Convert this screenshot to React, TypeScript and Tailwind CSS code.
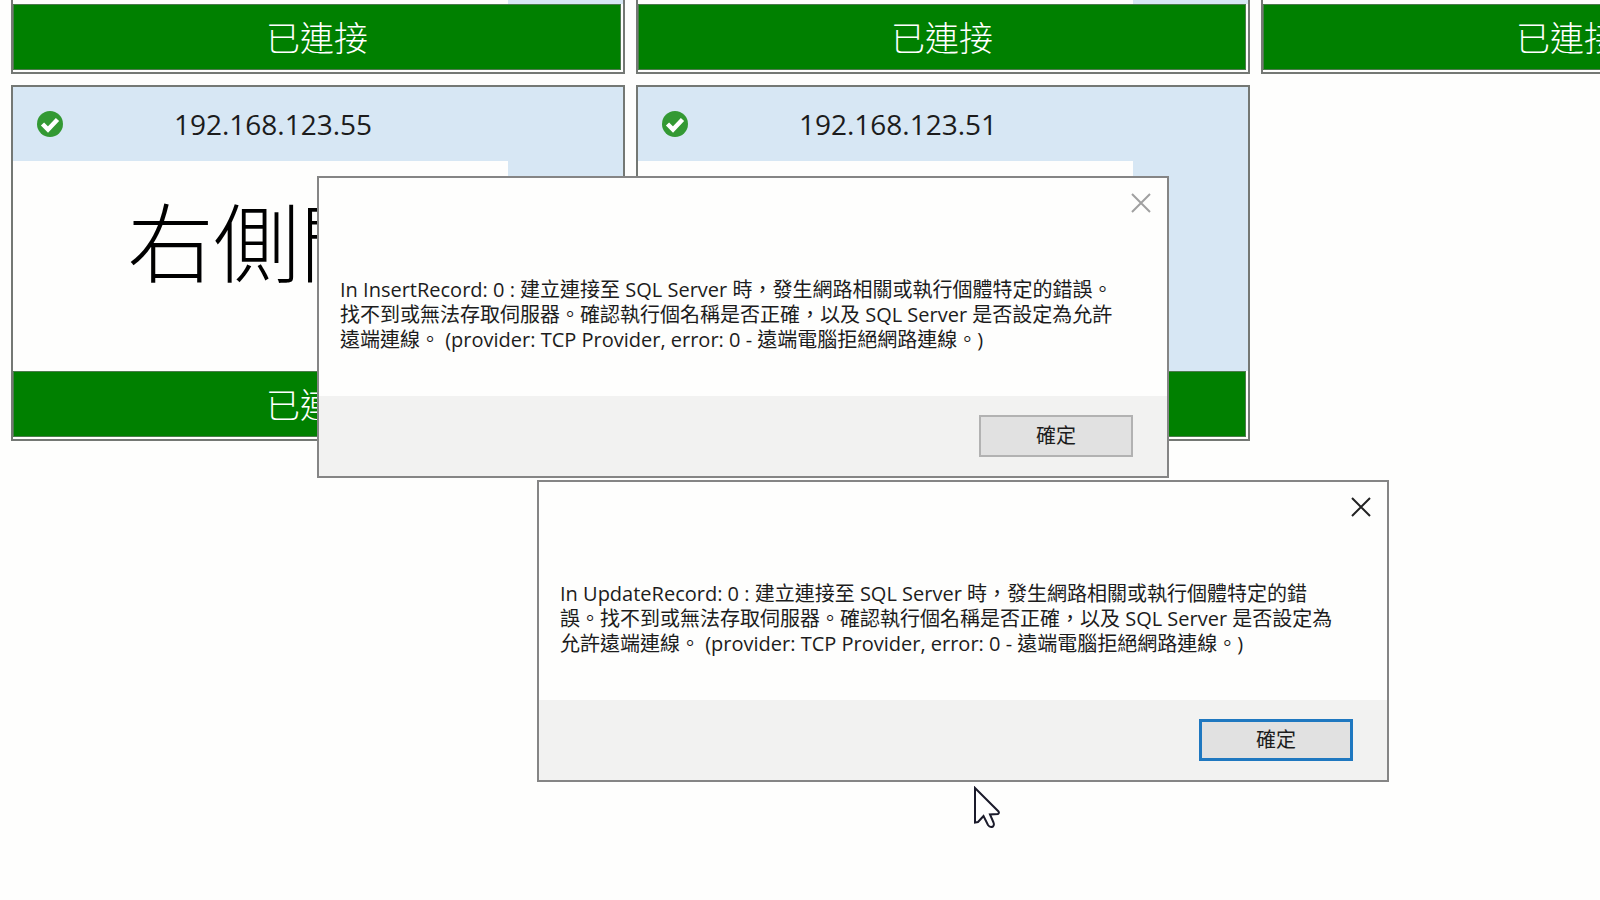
import clsx from "clsx";

const Check = () => (
  <svg viewBox="0 0 26 26" className="size-[26px]" aria-hidden="true">
    <circle cx="13" cy="13" r="13" fill="#339933" />
    <path d="M5.500 13l5.500 5.500L20.500 8.500" fill="none" stroke="#fff" strokeWidth="4.500" />
  </svg>
);

const Cross = () => (
  <svg viewBox="0 0 20 20" className="size-5" fill="none" stroke="currentColor" strokeWidth="2" aria-hidden="true">
    <path d="M1 1l18 18M19 1L1 19" />
  </svg>
);

type CardProps = { ip?: string; name?: string };

const Card = ({ ip, name }: CardProps) => (
  <section className={clsx("w-[614px] shrink-0 border-2 border-[#747874] bg-[#fefefd]", !ip && "border-t-0")}>
    {ip && (
      <header className="flex h-[74px] items-center bg-[#d7e7f4] pl-6">
        <Check />
        <h2 className="w-[420px] text-center text-[28px]">{ip}</h2>
      </header>
    )}
    <div className={clsx("flex", ip ? "h-[210px]" : "h-1")}>
      <div className="flex w-[495px] justify-center pt-5 pr-2 text-[86px] leading-[124px] font-light text-black">
        {name}
      </div>
      <div className="flex-1 bg-[#d7e7f4]" />
    </div>
    <div className="mr-0.5 mb-0.5 flex h-[66px] items-center justify-center border border-[#4d7a4d] bg-[#008000] pt-0.5 text-[34px] font-light text-white">
      已連接
    </div>
  </section>
);

type DialogProps = { lines: string[]; active?: boolean; className: string };

const Dialog = ({ lines, active, className }: DialogProps) => (
  <div
    role="dialog"
    className={clsx("absolute flex h-[302px] w-[852px] flex-col border-2 border-[#858585] bg-[#fefefd]", className)}
  >
    <div className="flex h-[87px] justify-end pt-[15px] pr-4">
      <button aria-label="關閉" className={clsx("size-5", active ? "text-[#222]" : "text-[#a0a0a0]")}>
        <Cross />
      </button>
    </div>
    <p className="flex-1 pt-3 pl-[21px] text-[20px] leading-[25px] whitespace-nowrap">
      {lines.map((line) => (
        <span key={line} className="block">{line}</span>
      ))}
    </p>
    <footer className="flex h-20 items-start justify-end bg-[#f2f2f1] pt-[19px] pr-[34px]">
      <button
        className={clsx(
          "h-[42px] w-[154px] bg-[#e1e1e1] text-[20px]",
          active ? "border-3 border-[#1f78c0]" : "border-2 border-[#b2b2b2]"
        )}
      >
        確定
      </button>
    </footer>
  </div>
);

const App = () => {
  return (
    <main className="relative flex h-screen flex-col gap-[11px] overflow-hidden bg-[#fefefd] pl-[11px] font-['Open_Sans','Noto_Sans_CJK_TC',sans-serif] text-[#1c1c1c]">
      <div className="flex gap-[11px]">
        <Card />
        <Card />
        <Card />
      </div>
      <div className="flex gap-[11px]">
        <Card ip="192.168.123.55" name="右側門" />
        <Card ip="192.168.123.51" />
      </div>

      <Dialog
        className="top-[176px] left-[317px]"
        lines={[
          "In InsertRecord: 0 : 建立連接至 SQL Server 時，發生網路相關或執行個體特定的錯誤。",
          "找不到或無法存取伺服器。確認執行個名稱是否正確，以及 SQL Server 是否設定為允許",
          "遠端連線。 (provider: TCP Provider, error: 0 - 遠端電腦拒絕網路連線。)",
        ]}
      />
      <Dialog
        active
        className="top-[480px] left-[537px]"
        lines={[
          "In UpdateRecord: 0 : 建立連接至 SQL Server 時，發生網路相關或執行個體特定的錯",
          "誤。找不到或無法存取伺服器。確認執行個名稱是否正確，以及 SQL Server 是否設定為",
          "允許遠端連線。 (provider: TCP Provider, error: 0 - 遠端電腦拒絕網路連線。)",
        ]}
      />

      {/* mouse pointer */}
      <svg viewBox="0 0 28 43" className="absolute top-[786px] left-[973px] w-7" aria-hidden="true">
        <path
          d="M2 2V36.500L5 36L10.500 30L15 39Q17 42 20 40.500Q21.500 39 20.500 36.500L17 28.500L25 28Q26.500 27 25.500 25.500Z"
          fill="#fff"
          stroke="#1b1b2b"
          strokeWidth="2"
        />
      </svg>
    </main>
  );
};

export default App;
